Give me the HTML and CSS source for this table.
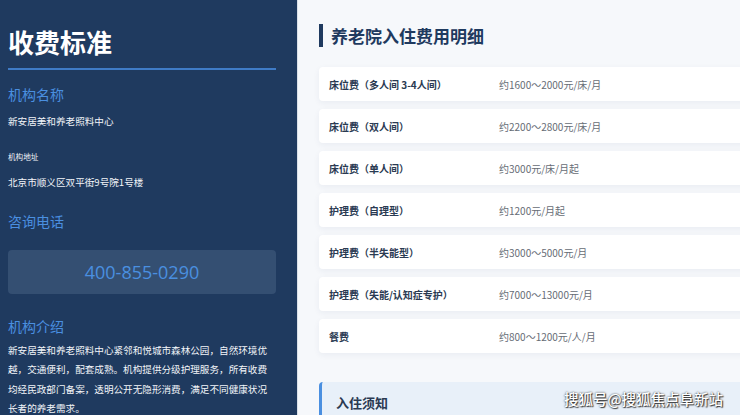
FILE: index.html
```html
<!DOCTYPE html>
<html lang="zh-CN">
<head>
<meta charset="utf-8">
<title>收费标准</title>
<link rel="stylesheet" href="styles.css">
</head>
<body>
<div class="page">
  <aside class="side">
    <h1 class="side-title">收费标准</h1>
    <h2 class="side-head">机构名称</h2>
    <p class="side-text">新安居美和养老照料中心</p>
    <p class="side-small">机构地址</p>
    <p class="side-text addr">北京市顺义区双平街9号院1号楼</p>
    <h2 class="side-head phone-head">咨询电话</h2>
    <div class="phone-box">400-855-0290</div>
    <h2 class="side-head intro-head">机构介绍</h2>
    <p class="side-para">新安居美和养老照料中心紧邻和悦城市森林公园，自然环境优越，交通便利，配套成熟。机构提供分级护理服务，所有收费均经民政部门备案，透明公开无隐形消费，满足不同健康状况长者的养老需求。</p>
  </aside>
  <main class="main">
    <h2 class="main-title">养老院入住费用明细</h2>
    <ul class="fee-list">
      <li class="fee-row"><span class="fee-name">床位费（多人间 3-4人间）</span><span class="fee-val">约1600～2000元/床/月</span></li>
      <li class="fee-row"><span class="fee-name">床位费（双人间）</span><span class="fee-val">约2200～2800元/床/月</span></li>
      <li class="fee-row"><span class="fee-name">床位费（单人间）</span><span class="fee-val">约3000元/床/月起</span></li>
      <li class="fee-row"><span class="fee-name">护理费（自理型）</span><span class="fee-val">约1200元/月起</span></li>
      <li class="fee-row"><span class="fee-name">护理费（半失能型）</span><span class="fee-val">约3000～5000元/月</span></li>
      <li class="fee-row"><span class="fee-name">护理费（失能/认知症专护）</span><span class="fee-val">约7000～13000元/月</span></li>
      <li class="fee-row"><span class="fee-name">餐费</span><span class="fee-val">约800～1200元/人/月</span></li>
    </ul>
    <section class="notice">
      <h3 class="notice-title">入住须知</h3>
    </section>
  </main>
  <div class="watermark">搜狐号@搜狐焦点阜新站</div>
</div>
</body>
</html>
```

FILE: styles.css
```css
* { box-sizing: border-box; }
html, body { margin: 0; padding: 0; }
body {
  width: 740px;
  height: 415px;
  overflow: hidden;
  font-family: "Noto Sans CJK SC", "Noto Sans", sans-serif;
  background: #f6f8fb;
}
.page {
  position: relative;
  display: flex;
  height: 415px;
  width: 740px;
  overflow: hidden;
}
.side {
  flex: 0 0 298px;
  background: #1f3a5f;
  border-right: 1px solid #d9e0e8;
  padding: 25px 21px 0 8px;
  color: #fff;
}
.side-title {
  margin: 0;
  font-size: 26px;
  line-height: 34px;
  font-weight: 700;
  padding-bottom: 9px;
  border-bottom: 2px solid #3f7bc6;
  color: #fff;
}
.side-head {
  margin: 14px 0 0;
  font-size: 14px;
  line-height: 20px;
  font-weight: 400;
  color: #4a8fe0;
}
.side-text {
  margin: 9px 0 0;
  font-size: 9.6px;
  line-height: 16px;
  color: #f2f5f9;
}
.side-small {
  margin: 22px 0 0;
  font-size: 7.6px;
  line-height: 12px;
  color: #f2f5f9;
}
.side-text.addr { margin-top: 11px; }
.side-head.phone-head { margin-top: 21px; }
.phone-box {
  margin-top: 19px;
  height: 44px;
  border-radius: 4px;
  background: #344f72;
  display: flex;
  align-items: center;
  justify-content: center;
  font-family: "Open Sans", "Noto Sans", sans-serif;
  font-size: 18px;
  color: #4a8fe0;
}
.side-head.intro-head { margin-top: 22px; }
.side-para {
  margin: 5px 0 0;
  font-size: 9.6px;
  line-height: 19.3px;
  color: #f2f5f9;
}
.main {
  flex: 0 0 620px;
  padding: 24px 0 0 21px;
}
.main-title {
  margin: 0;
  font-size: 17px;
  line-height: 23px;
  font-weight: 700;
  color: #1f3a5f;
  border-left: 4px solid #1f3a5f;
  padding-left: 8px;
}
.fee-list {
  list-style: none;
  margin: 20px 0 0;
  padding: 0;
  display: flex;
  flex-direction: column;
  gap: 8px;
}
.fee-row {
  display: grid;
  grid-template-columns: 170px 1fr;
  align-items: center;
  height: 34px;
  padding: 0 10px;
  background: #fff;
  border-radius: 4px;
  box-shadow: 0 2px 6px rgba(30, 58, 95, 0.06);
}
.fee-name {
  font-size: 10px;
  font-weight: 700;
  color: #2a3a52;
}
.fee-val {
  font-size: 10px;
  color: #666c75;
}
.notice {
  margin-top: 29px;
  height: 60px;
  background: #e8f0f9;
  border-left: 3px solid #4a8fe0;
  border-radius: 4px;
  padding: 12px 0 0 14px;
}
.notice-title {
  margin: 0;
  font-size: 13px;
  line-height: 18px;
  font-weight: 700;
  color: #2a3a52;
}
.watermark {
  position: absolute;
  left: 564px;
  top: 389px;
  font-size: 14.5px;
  line-height: 20px;
  font-weight: 500;
  color: #fff;
  text-shadow: 0 0 2px rgba(0,0,0,0.8), 1px 1px 1px rgba(0,0,0,0.7);
  white-space: nowrap;
}
```
